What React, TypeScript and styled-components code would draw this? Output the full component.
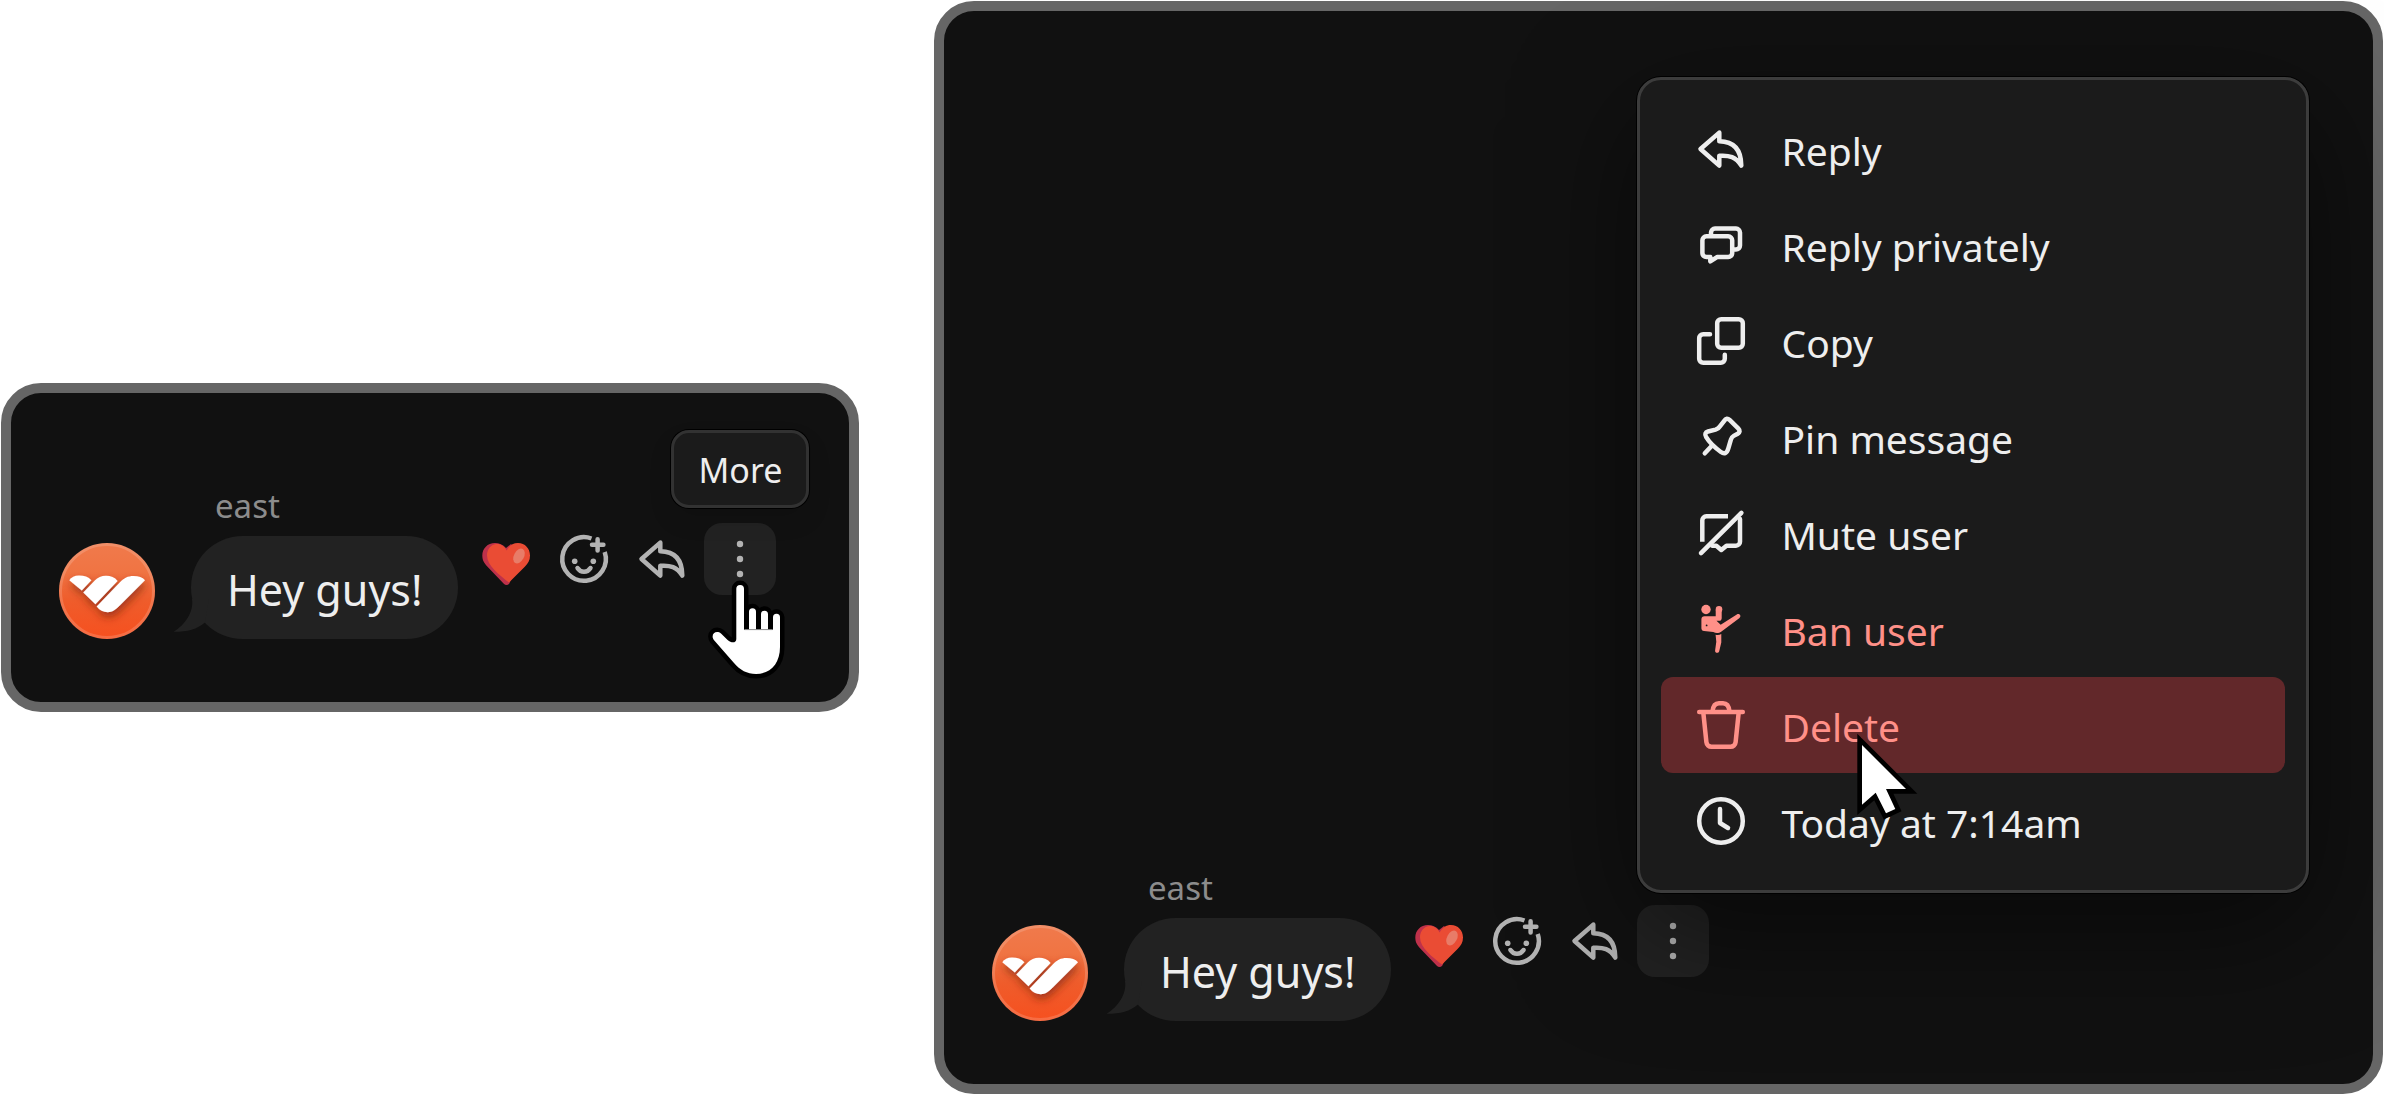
import React from "react";
import styled, { createGlobalStyle } from "styled-components";

const GlobalStyle = createGlobalStyle`
  *, *::before, *::after { box-sizing: border-box; }
  body {
    margin: 0;
    background: #ffffff;
    color: #eeeeee;
    font-family: "Noto Sans", "Open Sans", sans-serif;
  }
  button {
    margin: 0;
    padding: 0;
    border: 0;
    background: none;
    color: inherit;
    font: inherit;
    cursor: pointer;
  }
`;

const Page = styled.main`
  display: grid;
  grid-template-columns: minmax(0, 858fr) minmax(0, 1449fr);
  column-gap: 75px;
  align-items: center;
  min-height: 100vh;
  padding: 1px;
`;

const Panel = styled.section<{ $fill?: boolean }>`
  display: flex;
  flex-direction: column;
  justify-content: flex-end;
  align-self: ${(p) => (p.$fill ? "stretch" : "center")};
  padding: 88px 48px 63px;
  border: 10px solid #666666;
  border-radius: 40px;
  background: #111111;
`;

const MessageRow = styled.article`
  display: flex;
  align-items: flex-end;
`;

const Avatar = styled.span`
  flex: none;
  width: 96px;
  height: 96px;
  margin-right: 36px;
  svg { display: block; }
`;

const MessageBody = styled.div`
  flex: none;
  display: flex;
  flex-direction: column;
  gap: 6px;
`;

const Author = styled.span`
  padding: 1px 0 0 24px;
  color: #8c8c8c;
  font-size: 33px;
  line-height: 48px;
`;

const Bubble = styled.p`
  position: relative;
  margin: 0;
  padding: 24px 36px 19px;
  border-radius: 52px;
  background: #222222;
  font-size: 43px;
  line-height: 60px;
  white-space: nowrap;
`;

const Tail = styled.svg`
  position: absolute;
  left: -18px;
  bottom: 4px;
`;

const Actions = styled.div`
  display: flex;
  gap: 6px;
  margin: 0 0 44px 12px;
`;

const ActionButton = styled.button<{ $active?: boolean }>`
  display: flex;
  align-items: center;
  justify-content: center;
  width: 72px;
  height: 72px;
  border-radius: 18px;
  background: ${(p) => (p.$active ? "#222222" : "transparent")};
  color: #b3b3b3;
`;

const Anchor = styled.div`
  position: relative;
`;

const Tooltip = styled.span`
  position: absolute;
  bottom: calc(100% + 15px);
  left: 50%;
  transform: translateX(-50%);
  padding: 3px 24px 0;
  border: 3px solid #323232;
  border-radius: 18px;
  background: #1b1b1b;
  box-shadow: 0 0 0 1px #000000, 0 12px 24px rgba(0, 0, 0, 0.1);
  font-size: 34px;
  line-height: 69px;
  white-space: nowrap;
`;

const Menu = styled.div`
  position: absolute;
  bottom: calc(100% + 12px);
  left: 0;
  display: flex;
  flex-direction: column;
  width: 672px;
  padding: 21px;
  border: 3px solid #3c3c3c;
  border-radius: 24px;
  background: #1b1b1b;
  box-shadow: 0 0 0 1px #000000, 0 36px 120px rgba(0, 0, 0, 0.5);
`;

const MenuItem = styled.button<{ $danger?: boolean; $active?: boolean }>`
  position: relative;
  display: flex;
  align-items: center;
  gap: 36px;
  height: 96px;
  padding: 0 36px;
  border-radius: 12px;
  background: ${(p) => (p.$active ? "#62282a" : "transparent")};
  color: ${(p) => (p.$danger ? "#ff9088" : "#eeeeee")};
  font-size: 39px;
  line-height: 56px;
  text-align: left;
  white-space: nowrap;
`;

const MenuLabel = styled.span`
  padding-top: 4px;
`;

const IconSvg = styled.svg`
  flex: none;
  display: block;
  overflow: visible;
`;

const HandSvg = styled.svg`
  position: absolute;
  left: 4px;
  top: 57px;
  z-index: 1;
  overflow: visible;
  pointer-events: none;
`;

const ArrowSvg = styled.svg`
  position: absolute;
  left: 196px;
  top: 57px;
  z-index: 1;
  overflow: visible;
  pointer-events: none;
`;

function Icon({ children }: { children: React.ReactNode }) {
  return (
    <IconSvg
      width="48"
      height="48"
      viewBox="0 0 48 48"
      fill="none"
      stroke="currentColor"
      strokeWidth="4.5"
      strokeLinecap="round"
      strokeLinejoin="round"
      aria-hidden="true"
    >
      {children}
    </IconSvg>
  );
}

const ReplyIcon = () => (
  <Icon>
    <path d="M22.3 7.6 3.5 24l18.8 16.6V30.8c10-.8 16.6 1.2 22 9.8C44.2 25 37 16.4 22.3 16.2Z" />
  </Icon>
);

const PrivateIcon = () => (
  <Icon>
    <path d="M9.400 15.300h21.800a4 4 0 0 1 4 4v12.800a4 4 0 0 1-4 4H20l-6.700 4.200v-4.200H9.400a4 4 0 0 1-4-4V19.300a4 4 0 0 1 4-4Z" />
    <path strokeLinecap="butt" d="M14 15v-3.400a4 4 0 0 1 4-4h21a4 4 0 0 1 4 4V24.500a4 4 0 0 1-4 4h-3.600" />
  </Icon>
);

const CopyIcon = () => (
  <Icon>
    <rect x="20.2" y="2.2" width="25.600" height="28.600" rx="4" />
    <path d="M13 17.200H6.200a4 4 0 0 0-4 4v20.600a4 4 0 0 0 4 4h17.600a4 4 0 0 0 4-4v-4" />
  </Icon>
);

const PinIcon = () => (
  <Icon>
    <path d="M27.4 7.6c1.3-2.400 3.300-2.500 5.200-.7l8.600 8.500c2.200 2.300 1.700 4-.5 5.300l-4 2.200c-1.800 1-2.400 2-2.900 4l-2.400 8.300c-1.400 5.100-4 6.200-7.500 3.800-5.300-3.800-11.300-9.200-14.700-14.800-1.800-2.900-.8-5 1.800-5.700l7.500-1.900c2.100-.6 3.300-1.300 4.400-3.300Z" />
    <path d="m7.800 40.300 6.600-7.100" />
  </Icon>
);

const MuteIcon = () => (
  <Icon>
    <path d="M44.400 3.800 4 44.200" />
    <path strokeLinecap="butt" d="M31 7.300H9.300a4 4 0 0 0-4 4V32.800" />
    <path d="M43 10v22.700a4 4 0 0 1-4 4h-9.500L24.300 41l-5-4.300h-4" />
  </Icon>
);

const KickIcon = () => (
  <Icon>
    <g fill="currentColor" stroke="none">
      <circle cx="9" cy="4.5" r="4.7" />
      <circle cx="22" cy="4.200" r="3.300" />
      <path d="M7.500 11.300h11.200V5h6v8.200c-.1 1.600-1 2.600-2.600 2.600h-2.600l4.200 4L39.800 9.400c3-1.400 5 1.800 2.400 3.900L24.500 26.400c-2.700 1.900-5.500 1.900-8.200.6L7 26c-1.600-.2-2.600-1.200-2.600-2.800v-8.800c0-1.900 1.200-3.100 3.100-3.100Z" />
      <path d="M18.600 29.700c1.900.6 3.800.4 5.700-.6v8.500L22.200 46.200c-.7 2.600-4.500 2-4.100-.8l1.200-8.700Z" />
    </g>
    <circle cx="9.600" cy="20.400" r="0.900" fill="#1b1b1b" stroke="none" />
  </Icon>
);

const TrashIcon = () => (
  <Icon>
    <path d="M2.200 11h43.600M6.400 12.500l3 28.800a5 5 0 0 0 5 4.500h19.200a5 5 0 0 0 5-4.500l3-28.800" />
    <path strokeLinecap="butt" d="M15.500 10.500C16 5 18.500 2.200 22 2.200h4c3.500 0 6 2.800 6.500 8.300" />
  </Icon>
);

const ClockIcon = () => (
  <Icon>
    <circle cx="24" cy="24" r="21.8" />
    <path d="M23 12v14l8 5" />
  </Icon>
);

const SmileIcon = () => (
  <Icon>
    <path strokeLinecap="butt" d="M31.500 3.500A21.800 21.800 0 1 0 44.700 17" />
    <path d="M37.600 4.200v11.200M32 9.700h11.400M17.500 33c3.300 5.100 9.700 5.100 13 0" />
    <circle cx="14.7" cy="26.3" r="2.8" fill="currentColor" stroke="none" />
    <circle cx="33.3" cy="26.3" r="2.8" fill="currentColor" stroke="none" />
  </Icon>
);

const DotsIcon = () => (
  <Icon>
    <g fill="currentColor" stroke="none">
      <circle cx="24" cy="9" r="3.2" />
      <circle cx="24" cy="24" r="3.2" />
      <circle cx="24" cy="39" r="3.2" />
    </g>
  </Icon>
);

const HeartIcon = () => (
  <Icon>
    <g stroke="none">
      <path
        fill="#be314a"
        d="M24 13C21 9.500 17 8 13 8 5.500 8 .3 13.500.3 20.500c0 5 2.200 8 5.200 11.200l16.300 17c1.700 1.700 3.800 1.700 5.400 0L40 20 29 9Z"
      />
      <path
        fill="#ea4c34"
        d="M24.600 15.500C27.500 10.500 31 8 36 8c7 0 12 5.500 12 12.500 0 5-2 8-5.200 11.200L27 47.600c-9.500-7.600-22-16.600-22-27.300C5 14.500 8.500 9.800 14 9c4.500-.5 8.500 2 10.600 6.500Z"
      />
      <ellipse cx="37" cy="21" rx="5" ry="8" transform="rotate(28 37 21)" fill="#e87c68" />
    </g>
  </Icon>
);

function BrandAvatar() {
  const id = React.useId();
  return (
    <Avatar>
      <svg width="96" height="96" viewBox="0 0 96 96" role="img" aria-label="east's avatar">
        <defs>
          <linearGradient id={id + "g"} x1="0" y1="0" x2="0" y2="1">
            <stop offset="0" stopColor="#f07a4c" />
            <stop offset="0.3" stopColor="#f07443" />
            <stop offset="0.6" stopColor="#ef5c2b" />
            <stop offset="1" stopColor="#f6501f" />
          </linearGradient>
          <filter id={id + "s"} x="-20%" y="-20%" width="150%" height="170%">
            <feDropShadow dx="1" dy="5" stdDeviation="4" floodColor="#7a2208" floodOpacity="0.65" />
          </filter>
        </defs>
        <circle cx="48" cy="48" r="48" fill={`url(#${id}g)`} />
        <circle cx="48" cy="48" r="46.5" fill="none" stroke="#ffffff" strokeOpacity="0.16" strokeWidth="3" />
        <g fill="#ffffff" filter={`url(#${id}s)`}>
          <path d="M10.300 37.200c2-3 5.200-4.700 9.700-4.700 5.200 0 9.400 1.400 12.400 4.800L22.800 47.600Z" />
          <path d="m24.300 49.600 11.500-12c3-3.200 6.600-4.900 11.200-4.900 4.700 0 8.800 1.600 11.600 5.200L36.400 61.200Z" />
          <path d="M37.700 63.600 61 39.300c4-4.200 8-6.200 13.500-6.200 5 0 9 1.200 11.500 4.200L60.500 62.800c-4.200 4.200-7 6.400-11.800 6.400-4.400 0-8.200-2-11-5.600Z" />
        </g>
      </svg>
    </Avatar>
  );
}

const HAND =
  "M28.3 59V8.800a3.850 3.850 0 0 1 7.700 0V49.700h5V31.800a3.500 3.500 0 0 1 7 0V49.700h5V34.200a3.500 3.500 0 0 1 7 0V49.700h5V37.300a3.500 3.500 0 0 1 7 0V67C72 84 62 94 48 94c-9 0-16-4-22-11L6.300 60.600C1.500 54.500 8 49.500 13 53.600l6.600 6.400c4 3.500 8.700 3 8.700-1Z";

const HandCursor = () => (
  <HandSvg width="78" height="98" viewBox="0 0 78 98" aria-hidden="true">
    <path d={HAND} fill="#000000" stroke="#000000" strokeWidth="9" strokeLinejoin="round" />
    <path d={HAND} fill="#ffffff" />
    <path d="M36.5 49.600h28" stroke="#8a8a8a" strokeWidth="1" />
  </HandSvg>
);

const ArrowCursor = () => (
  <ArrowSvg width="62" height="86" viewBox="0 0 62 86" aria-hidden="true">
    <path
      d="M5 11 49 55H29l9.300 20-9.300 4.300-10.300-20.600L5 70.700Z"
      fill="#ffffff"
      stroke="#000000"
      strokeWidth="9.4"
      strokeLinejoin="miter"
      paintOrder="stroke"
    />
  </ArrowSvg>
);

function Message({ children }: { children: React.ReactNode }) {
  return (
    <MessageRow>
      <BrandAvatar />
      <MessageBody>
        <Author>east</Author>
        <Bubble>
          <Tail width="36" height="36" viewBox="0 0 36 36" aria-hidden="true">
            <path d="M19 0C21 13 12 26 .5 32.800 13 33 24 30.500 32 23.500L36 0Z" fill="#222222" />
          </Tail>
          Hey guys!
        </Bubble>
      </MessageBody>
      <Actions>
        <ActionButton type="button" aria-label="React with heart"><HeartIcon /></ActionButton>
        <ActionButton type="button" aria-label="Add reaction"><SmileIcon /></ActionButton>
        <ActionButton type="button" aria-label="Reply"><ReplyIcon /></ActionButton>
        <Anchor>
          <ActionButton type="button" aria-label="More" $active><DotsIcon /></ActionButton>
          {children}
        </Anchor>
      </Actions>
    </MessageRow>
  );
}

const ITEMS = [
  { label: "Reply", icon: ReplyIcon },
  { label: "Reply privately", icon: PrivateIcon },
  { label: "Copy", icon: CopyIcon },
  { label: "Pin message", icon: PinIcon },
  { label: "Mute user", icon: MuteIcon },
  { label: "Ban user", icon: KickIcon, danger: true },
  { label: "Delete", icon: TrashIcon, danger: true, active: true },
  { label: "Today at 7:14am", icon: ClockIcon },
];

export default function App() {
  return (
    <>
      <GlobalStyle />
      <Page>
        <Panel>
          <Message>
            <Tooltip role="tooltip">More</Tooltip>
            <HandCursor />
          </Message>
        </Panel>
        <Panel $fill>
          <Message>
            <Menu role="menu">
              {ITEMS.map(({ label, icon: ItemIcon, danger, active }) => (
                <MenuItem key={label} type="button" role="menuitem" $danger={danger} $active={active}>
                  <ItemIcon />
                  <MenuLabel>{label}</MenuLabel>
                  {active && <ArrowCursor />}
                </MenuItem>
              ))}
            </Menu>
          </Message>
        </Panel>
      </Page>
    </>
  );
}
